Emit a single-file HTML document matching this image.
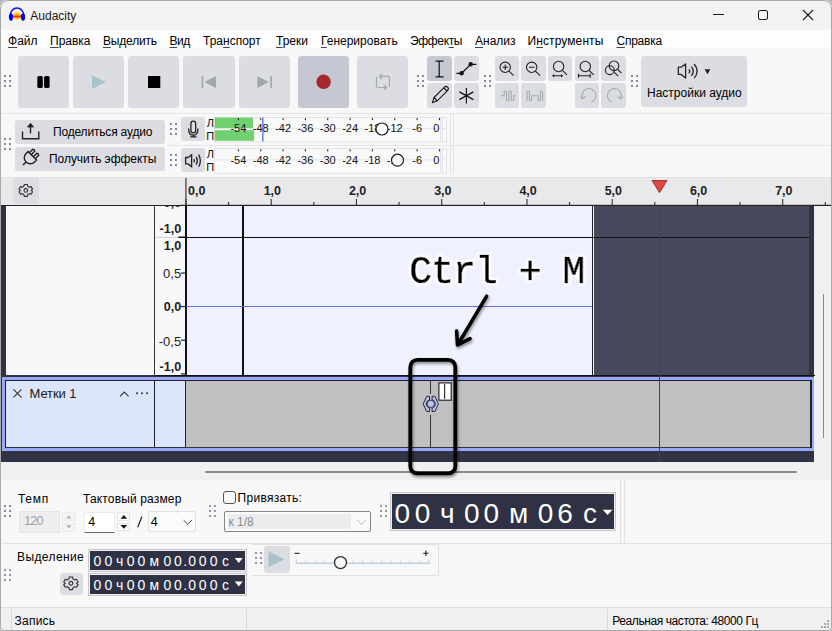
<!DOCTYPE html>
<html><head><meta charset="utf-8">
<style>
*{box-sizing:border-box;margin:0;padding:0}
html,body{width:832px;height:631px;overflow:hidden;background:#b4b8c0;font-family:"Liberation Sans",sans-serif;color:#000}
.a{position:absolute}
#win{position:absolute;left:0;top:0;width:832px;height:631px;background:#f8f8f8;border-radius:8px 8px 4px 4px;overflow:hidden}
#frame{position:absolute;left:0;top:0;width:832px;height:630.5px;border:1px solid #a9a9a9;border-radius:8px 8px 4px 4px}
.t{position:absolute;white-space:pre;font-size:12px;line-height:14px}
.menu span{position:absolute;top:0;white-space:pre;font-size:12px;line-height:14px}
.u{text-decoration:underline;text-decoration-color:#444;text-underline-offset:1.5px}
.btn{position:absolute;background:#dcdde2;border-radius:3px}
.grip{position:absolute;width:2px;height:2px;background:#868aa0;box-shadow:5px 0 #868aa0,0 5px #868aa0,5px 5px #868aa0,0 10px #868aa0,5px 10px #868aa0}
.g2{background:#9296aa;box-shadow:5px 0 #9296aa,0 5px #9296aa,5px 5px #9296aa,0 10px #9296aa,5px 10px #9296aa}
.hl{position:absolute;height:1px;background:#e3e3e3}
.vl{position:absolute;width:1px;background:#e3e3e3}
</style></head><body>
<div id="win">
  <!-- title bar -->
  <div class="a" style="left:0;top:0;width:832px;height:30px;background:#f3f3f3"></div>
  <svg class="a" style="left:0;top:0" width="32" height="28" viewBox="0 0 32 28">
    <defs><radialGradient id="ag" cx="50%" cy="50%" r="50%"><stop offset="0" stop-color="#ff8a00"/><stop offset="0.55" stop-color="#ffc020"/><stop offset="1" stop-color="#fff0a0"/></radialGradient></defs>
    <ellipse cx="17" cy="16" rx="4.6" ry="4.4" fill="url(#ag)"/>
    <rect x="12.8" y="15.6" width="8.4" height="1.8" fill="#ff2a00"/>
    <path d="M10.2 15.5 A6.8 7.4 0 0 1 23.8 15.5" fill="none" stroke="#1010ff" stroke-width="1.5"/>
    <ellipse cx="11" cy="17" rx="2.1" ry="3.7" fill="#0000f0"/>
    <ellipse cx="23" cy="17" rx="2.1" ry="3.7" fill="#0000f0"/>
  </svg>
  <div class="t" style="left:30.3px;top:9px;font-size:12px;color:#1a1a1a">Audacity</div>
  <!-- window controls -->
  <div class="a" style="left:713px;top:14px;width:11px;height:1px;background:#1a1a1a"></div>
  <div class="a" style="left:758px;top:10px;width:10px;height:10px;border:1px solid #1a1a1a;border-radius:2px"></div>
  <svg class="a" style="left:802px;top:9px" width="12" height="12" viewBox="0 0 12 12"><path d="M1 1L11 11M11 1L1 11" stroke="#1a1a1a" stroke-width="1.1"/></svg>

  <!-- menu bar -->
  <div class="a" style="left:0;top:30px;width:832px;height:18.4px;background:#fdfdfd"></div>
  <div class="menu a" style="left:0;top:33.7px">
    <span style="left:8px"><span class="u" style="position:static">Ф</span>айл</span>
    <span style="left:50px"><span class="u" style="position:static">П</span>равка</span>
    <span style="left:103px;letter-spacing:-0.18px"><span class="u" style="position:static">В</span>ыделить</span>
    <span style="left:169.5px;letter-spacing:-0.5px"><span class="u" style="position:static">В</span>ид</span>
    <span style="left:203px">Тра<span class="u" style="position:static">н</span>спорт</span>
    <span style="left:276px"><span class="u" style="position:static">Т</span>реки</span>
    <span style="left:321px"><span class="u" style="position:static">Г</span>енерировать</span>
    <span style="left:410px;letter-spacing:-0.35px">Эффек<span class="u" style="position:static">т</span>ы</span>
    <span style="left:475px"><span class="u" style="position:static">А</span>нализ</span>
    <span style="left:527.5px;letter-spacing:0.1px">И<span class="u" style="position:static">н</span>струменты</span>
    <span style="left:616.5px;letter-spacing:-0.25px"><span class="u" style="position:static">С</span>правка</span>
  </div>

  <!-- toolbar 1 -->
  <div class="hl" style="left:0;top:113px;width:832px;background:#e6e6e6"></div>
  <div class="grip" style="left:4px;top:75px"></div>
  <div class="btn" style="left:18px;top:56px;width:51px;height:52px"></div>
  <div class="btn" style="left:73px;top:56px;width:51px;height:52px"></div>
  <div class="btn" style="left:128px;top:56px;width:51px;height:52px"></div>
  <div class="btn" style="left:183px;top:56px;width:52px;height:52px"></div>
  <div class="btn" style="left:239px;top:56px;width:51px;height:52px"></div>
  <div class="btn" style="left:298px;top:56px;width:51px;height:52px;background:#c5c7d3"></div>
  <div class="btn" style="left:357px;top:56px;width:51px;height:52px"></div>
  <svg class="a" style="left:0;top:50px" width="420" height="64" viewBox="0 50 420 64">
    <rect x="37.3" y="76" width="5.5" height="12" rx="1.6" fill="#000"/>
    <rect x="44.1" y="76" width="5.5" height="12" rx="1.6" fill="#000"/>
    <path d="M92 75.2 L106 82 L92 89 Z" fill="#a9c3cb"/>
    <rect x="148" y="76" width="12.3" height="12" fill="#000"/>
    <rect x="201.6" y="76" width="1.6" height="12" fill="#a2a6ad"/>
    <path d="M216 76 L204.5 82 L216 88 Z" fill="#a2a6ad"/>
    <path d="M257.3 76 L268.8 82 L257.3 88 Z" fill="#a2a6ad"/>
    <rect x="270.3" y="76" width="1.6" height="12" fill="#a2a6ad"/>
    <circle cx="323.6" cy="81.8" r="7.2" fill="#a5282c"/>
    <g fill="none" stroke="#a4a8b0" stroke-width="1.2" stroke-linecap="round">
      <path d="M389.4 86.3 V77.6 Q389.4 76.4 388.2 76.4 H379.6 M381.9 74.1 L379.4 76.4 L381.9 78.7"/>
      <path d="M376.5 77.4 V86.3 Q376.5 87.5 377.7 87.5 H386.4 M384.1 85.2 L386.6 87.5 L384.1 89.8"/>
    </g>
  </svg>
  <div class="grip" style="left:417px;top:75px"></div>
  <!-- tools -->
  <div class="btn" style="left:427px;top:56px;width:25px;height:25px;background:#c5c7d3"></div>
  <div class="btn" style="left:454px;top:56px;width:25px;height:25px"></div>
  <div class="btn" style="left:427px;top:83px;width:25px;height:25px"></div>
  <div class="btn" style="left:454px;top:83px;width:25px;height:25px"></div>
  <div class="grip" style="left:484px;top:75px"></div>
  <div class="btn" style="left:495px;top:56px;width:24px;height:25px"></div>
  <div class="btn" style="left:521px;top:56px;width:25px;height:25px"></div>
  <div class="btn" style="left:548px;top:56px;width:24px;height:25px"></div>
  <div class="btn" style="left:575px;top:56px;width:24px;height:25px"></div>
  <div class="btn" style="left:601px;top:56px;width:25px;height:25px"></div>
  <div class="btn" style="left:495px;top:83px;width:24px;height:25px"></div>
  <div class="btn" style="left:521px;top:83px;width:25px;height:25px"></div>
  <div class="btn" style="left:575px;top:83px;width:24px;height:25px"></div>
  <div class="btn" style="left:601px;top:83px;width:25px;height:25px"></div>
  <svg class="a" style="left:420px;top:50px" width="212" height="64" viewBox="420 50 212 64">
    <g stroke="#111" stroke-width="1.2" fill="none">
      <path d="M439.2 61.2 V76.8 M435.6 61.2 H443.6 M435.6 76.8 H443.6"/>
      <path d="M456.5 73.3 H461.6 L470.7 64.3 H476.3"/>
      <path d="M466.4 88 V103.4 M459.4 99.6 L473.4 91.9 M459.4 91.9 L473.4 99.6"/>
      <path d="M432.5 102.7 L434 97.5 L444.2 87.3 Q446 85.6 447.6 87.2 Q449.2 88.9 447.5 90.6 L437.3 100.8 Z M434 97.5 L437.3 100.8 M443.8 87.8 L447 91" stroke-width="1.1"/>
    </g>
    <circle cx="461.6" cy="73.3" r="2.2" fill="#111"/>
    <circle cx="470.7" cy="64.3" r="2.2" fill="#111"/>
    <g stroke="#222" stroke-width="1.1" fill="none">
      <circle cx="505.2" cy="67.3" r="5.2"/><path d="M509 71.1 L513.6 75.7 M502.5 67.3 H508 M505.2 64.6 V70"/>
      <circle cx="531.7" cy="67.3" r="5.2"/><path d="M535.5 71.1 L540.1 75.7 M529 67.3 H534.5"/>
      <circle cx="558.6" cy="66.5" r="5.2"/><path d="M562.4 70.3 L567 74.9 M552.5 75.8 H562.7"/>
      <circle cx="585.3" cy="66.5" r="5.2"/><path d="M589.1 70.3 L593.7 74.9 M578.5 75.8 H590.2 M578.5 73.8 V77.8 M590.2 73.8 V77.8"/>
      <circle cx="609.8" cy="70.2" r="4.4"/><circle cx="614" cy="65.8" r="4.8"/><path d="M617.4 69.2 L621.4 73.2 M614.4 72.4 L618.2 76.2"/>
    </g>
    <path d="M552.2 75.8 L554.2 74 V77.6 Z M563 75.8 L561 74 V77.6 Z" fill="#222"/>
    <g stroke="#a6aab2" stroke-width="1.1" fill="none">
      <path d="M500.5 95.8 H504.1 V92.2 Q504.1 91 505.3 91 Q506.5 91 506.5 92.2 V99.6 Q506.5 100.8 507.7 100.8 Q508.9 100.8 508.9 99.6 V92.2 Q508.9 91 510.1 91 Q511.3 91 511.3 92.2 V99.6 Q511.3 100.8 512.5 100.8 Q513.7 100.8 513.7 99.6 V95.8 H515.8"/>
      <path d="M527.1 100.8 V92.2 Q527.1 91 528.25 91 Q529.4 91 529.4 92.2 V99.6 Q529.4 100.8 530.55 100.8 Q531.7 100.8 531.7 99.6 V95.8 H538.2 V99.6 Q538.2 100.8 539.3 100.8 Q540.4 100.8 540.4 99.6 V92.2 Q540.4 91 541.5 91 Q542.6 91 542.6 92.2 V100.8"/>
      <path d="M591.5 102 A6.9 6.9 0 1 0 582.6 98"/><path d="M580.3 96.6 L582.7 98.8 L585.3 96.5"/>
      <path d="M611.9 102 A6.9 6.9 0 1 1 620.8 98"/><path d="M623.1 96.6 L620.7 98.8 L618.1 96.5"/>
    </g>
  </svg>
  <div class="grip" style="left:631px;top:75px"></div>
  <div class="btn" style="left:641px;top:56px;width:106px;height:51px"></div>
  <svg class="a" style="left:670px;top:58px" width="50" height="26" viewBox="670 58 50 26">
    <g stroke="#222" stroke-width="1.2" fill="none">
      <path d="M678.3 67.2 H681.2 L685.6 63.9 V78 L681.2 74.4 H678.3 Z" stroke-linejoin="round" stroke-width="1.3"/>
      <path d="M688.9 69.4 Q690.6 71.3 688.9 73.3" stroke-width="1.3"/><path d="M691.3 66.6 Q695.3 71.2 691.3 75.9" stroke-width="1.3"/><path d="M694.1 64 Q700.2 71.1 694.1 78.2" stroke-width="1.3"/>
    </g>
    <path d="M704.6 69.3 H710.4 L707.5 74.3 Z" fill="#222"/>
  </svg>
  <div class="t" style="left:647px;top:86px;font-size:12px;letter-spacing:0px">Настройки аудио</div>

  <!-- toolbar rows 2-3 -->
  <div class="hl" style="left:167px;top:145px;width:665px;background:#e6e6e6"></div>
  
  <div class="grip" style="left:4px;top:138px"></div>
  <div class="btn" style="left:15px;top:120px;width:150px;height:24px"></div>
  <div class="btn" style="left:15px;top:147px;width:150px;height:24px"></div>
  <svg class="a" style="left:15px;top:118px" width="30" height="56" viewBox="15 118 30 56">
    <g stroke="#222" stroke-width="1.2" fill="none">
      <path d="M22.5 131.5 V138.8 H38.8 V131.5" stroke-width="1.4"/><path d="M30.5 133.5 V124" stroke-width="1.4"/><path d="M27.5 127 L30.5 123.2 L33.5 127 Z" fill="#222" stroke-width="0.8"/>
      <g transform="translate(31.5 156.5) rotate(45) scale(1.1)"><path d="M-5.5 -1 H5.5 V1.5 A5.5 5.5 0 0 1 -5.5 1.5 Z M-3.8 -1 V-5.5 Q-2.6 -6.6 -1.4 -5.5 V-1 M1.4 -1 V-5.5 Q2.6 -6.6 3.8 -5.5 V-1 M0 7 V11" stroke-width="1.3"/></g>
    </g>
  </svg>
  <div class="t" style="left:53px;top:125px;font-size:12px;letter-spacing:-0.18px">Поделиться аудио</div>
  <div class="t" style="left:49px;top:152px;font-size:12px;letter-spacing:-0.05px">Получить эффекты</div>
  <div class="grip" style="left:170px;top:122.5px"></div>
  <div class="grip" style="left:170px;top:154px"></div>
  <div class="btn" style="left:181px;top:117px;width:24px;height:24px"></div>
  <div class="btn" style="left:181px;top:148px;width:24px;height:24px"></div>
  <svg class="a" style="left:181px;top:117px" width="24" height="56" viewBox="181 117 24 56">
    <g stroke="#222" stroke-width="1.2" fill="none">
      <rect x="190.9" y="121.2" width="4.8" height="11.6" rx="2.4" stroke-width="1.3"/>
      <path d="M188.6 128.5 Q188.6 135.2 193.3 135.2 Q198 135.2 198 128.5" stroke-width="1.3"/><path d="M193.3 135.2 V136.6 M190.2 136.8 H196.5" stroke-width="1.3"/>
      <path d="M185.6 157.5 H188 L191.6 154.8 V166.6 L188 163.9 H185.6 Z" stroke-width="1.3"/>
      <path d="M194 159 Q194.8 160.7 194 162.4" stroke-width="1.3"/><path d="M196.3 156.8 Q198.2 160.7 196.3 164.6" stroke-width="1.3"/><path d="M198.8 154.6 Q201.8 160.7 198.8 166.8" stroke-width="1.3"/>
    </g>
  </svg>
  <svg class="a" style="left:200px;top:114px" width="260" height="62" viewBox="200 114 260 62">
    <rect x="214.5" y="117.5" width="226" height="24.5" fill="#fafafa" stroke="#e2e2e2"/>
    <line x1="215" y1="128.7" x2="440" y2="128.7" stroke="#e2e2e2"/>
    <rect x="442.5" y="117.5" width="4" height="24.5" fill="#fafafa" stroke="#e2e2e2"/>
    <line x1="442.5" y1="128.7" x2="446.5" y2="128.7" stroke="#e2e2e2"/>
    <rect x="214.8" y="117.6" width="38.2" height="10.5" fill="#6fd16f"/>
    <rect x="214.8" y="130.2" width="39.3" height="10.6" fill="#6fd16f"/>
    <line x1="238.4" y1="118" x2="238.4" y2="120.2" stroke="#222" stroke-width="1"/>
    <text x="238.4" y="132.3" text-anchor="middle" font-size="11" font-family="Liberation Sans" fill="#111">-54</text>
    <line x1="260.74" y1="118" x2="260.74" y2="120.2" stroke="#222" stroke-width="1"/>
    <text x="260.74" y="132.3" text-anchor="middle" font-size="11" font-family="Liberation Sans" fill="#111">-48</text>
    <line x1="283.08" y1="118" x2="283.08" y2="120.2" stroke="#222" stroke-width="1"/>
    <text x="283.08" y="132.3" text-anchor="middle" font-size="11" font-family="Liberation Sans" fill="#111">-42</text>
    <line x1="305.42" y1="118" x2="305.42" y2="120.2" stroke="#222" stroke-width="1"/>
    <text x="305.42" y="132.3" text-anchor="middle" font-size="11" font-family="Liberation Sans" fill="#111">-36</text>
    <line x1="327.76" y1="118" x2="327.76" y2="120.2" stroke="#222" stroke-width="1"/>
    <text x="327.76" y="132.3" text-anchor="middle" font-size="11" font-family="Liberation Sans" fill="#111">-30</text>
    <line x1="350.1" y1="118" x2="350.1" y2="120.2" stroke="#222" stroke-width="1"/>
    <text x="350.1" y="132.3" text-anchor="middle" font-size="11" font-family="Liberation Sans" fill="#111">-24</text>
    <line x1="372.44" y1="118" x2="372.44" y2="120.2" stroke="#222" stroke-width="1"/>
    <text x="372.44" y="132.3" text-anchor="middle" font-size="11" font-family="Liberation Sans" fill="#111">-18</text>
    <line x1="394.78" y1="118" x2="394.78" y2="120.2" stroke="#222" stroke-width="1"/>
    <text x="394.78" y="132.3" text-anchor="middle" font-size="11" font-family="Liberation Sans" fill="#111">-12</text>
    <line x1="417.12" y1="118" x2="417.12" y2="120.2" stroke="#222" stroke-width="1"/>
    <text x="417.12" y="132.3" text-anchor="middle" font-size="11" font-family="Liberation Sans" fill="#111">-6</text>
    <line x1="439.46000000000004" y1="118" x2="439.46000000000004" y2="120.2" stroke="#222" stroke-width="1"/>
    <text x="436.2" y="132.3" text-anchor="middle" font-size="11" font-family="Liberation Sans" fill="#111">0</text>
    <rect x="262.2" y="117.5" width="1.3" height="24" fill="#4d6ee6"/>
    <circle cx="382" cy="129" r="6" fill="#fafafa" stroke="#222" stroke-width="1.2"/>
    <text x="210.3" y="126.5" text-anchor="middle" font-size="11" font-family="Liberation Sans" fill="#111">Л</text>
    <text x="210.3" y="139.8" text-anchor="middle" font-size="11" font-family="Liberation Sans" fill="#111">П</text>
    <rect x="214.5" y="148.7" width="226" height="24.5" fill="#fafafa" stroke="#e2e2e2"/>
    <line x1="215" y1="159.89999999999998" x2="440" y2="159.89999999999998" stroke="#e2e2e2"/>
    <rect x="442.5" y="148.7" width="4" height="24.5" fill="#fafafa" stroke="#e2e2e2"/>
    <line x1="442.5" y1="159.89999999999998" x2="446.5" y2="159.89999999999998" stroke="#e2e2e2"/>
    <line x1="238.4" y1="149.2" x2="238.4" y2="151.39999999999998" stroke="#222" stroke-width="1"/>
    <text x="238.4" y="163.5" text-anchor="middle" font-size="11" font-family="Liberation Sans" fill="#111">-54</text>
    <line x1="260.74" y1="149.2" x2="260.74" y2="151.39999999999998" stroke="#222" stroke-width="1"/>
    <text x="260.74" y="163.5" text-anchor="middle" font-size="11" font-family="Liberation Sans" fill="#111">-48</text>
    <line x1="283.08" y1="149.2" x2="283.08" y2="151.39999999999998" stroke="#222" stroke-width="1"/>
    <text x="283.08" y="163.5" text-anchor="middle" font-size="11" font-family="Liberation Sans" fill="#111">-42</text>
    <line x1="305.42" y1="149.2" x2="305.42" y2="151.39999999999998" stroke="#222" stroke-width="1"/>
    <text x="305.42" y="163.5" text-anchor="middle" font-size="11" font-family="Liberation Sans" fill="#111">-36</text>
    <line x1="327.76" y1="149.2" x2="327.76" y2="151.39999999999998" stroke="#222" stroke-width="1"/>
    <text x="327.76" y="163.5" text-anchor="middle" font-size="11" font-family="Liberation Sans" fill="#111">-30</text>
    <line x1="350.1" y1="149.2" x2="350.1" y2="151.39999999999998" stroke="#222" stroke-width="1"/>
    <text x="350.1" y="163.5" text-anchor="middle" font-size="11" font-family="Liberation Sans" fill="#111">-24</text>
    <line x1="372.44" y1="149.2" x2="372.44" y2="151.39999999999998" stroke="#222" stroke-width="1"/>
    <text x="372.44" y="163.5" text-anchor="middle" font-size="11" font-family="Liberation Sans" fill="#111">-18</text>
    <line x1="394.78" y1="149.2" x2="394.78" y2="151.39999999999998" stroke="#222" stroke-width="1"/>
    <text x="394.78" y="163.5" text-anchor="middle" font-size="11" font-family="Liberation Sans" fill="#111">-12</text>
    <line x1="417.12" y1="149.2" x2="417.12" y2="151.39999999999998" stroke="#222" stroke-width="1"/>
    <text x="417.12" y="163.5" text-anchor="middle" font-size="11" font-family="Liberation Sans" fill="#111">-6</text>
    <line x1="439.46000000000004" y1="149.2" x2="439.46000000000004" y2="151.39999999999998" stroke="#222" stroke-width="1"/>
    <text x="436.2" y="163.5" text-anchor="middle" font-size="11" font-family="Liberation Sans" fill="#111">0</text>
    <circle cx="397.5" cy="160.2" r="6" fill="#fafafa" stroke="#222" stroke-width="1.2"/>
    <text x="210.3" y="157.7" text-anchor="middle" font-size="11" font-family="Liberation Sans" fill="#111">Л</text>
    <text x="210.3" y="171.0" text-anchor="middle" font-size="11" font-family="Liberation Sans" fill="#111">П</text>
    <line x1="450.5" y1="114" x2="450.5" y2="175" stroke="#e2e2e2"/><line x1="453.5" y1="114" x2="453.5" y2="175" stroke="#e2e2e2"/>
  </svg>

  <!-- ruler -->
  <div class="a" style="left:0;top:177px;width:832px;height:28px;background:#e9e9eb;border-top:1px solid #e1e1e3"></div>
  <div class="a" style="left:0;top:204.8px;width:832px;height:1.2px;background:#222"></div>
  <div class="btn" style="left:13px;top:178px;width:26px;height:26px"></div>
  <svg class="a" style="left:13px;top:178px" width="26" height="26" viewBox="13 178 26 26">
    <g transform="translate(25.8 190.4) scale(0.9)" fill="none" stroke="#333" stroke-width="1.25">
      <path d="M-1.6 -6.6 L1.6 -6.6 L2.2 -4.6 L3.9 -3.6 L5.9 -4.2 L7.5 -1.4 L6 0 L7.5 1.4 L5.9 4.2 L3.9 3.6 L2.2 4.6 L1.6 6.6 L-1.6 6.6 L-2.2 4.6 L-3.9 3.6 L-5.9 4.2 L-7.5 1.4 L-6 0 L-7.5 -1.4 L-5.9 -4.2 L-3.9 -3.6 L-2.2 -4.6 Z" stroke-linejoin="round"/>
      <circle r="2"/>
    </g>
  </svg>
  <svg class="a" style="left:180px;top:176px" width="652" height="30" viewBox="180 176 652 30">
    <rect x="185.2" y="178" width="1.4" height="28" fill="#555"/>
    <rect x="185.40" y="199" width="1.1" height="6" fill="#333"/>
    <text x="188.00" y="195.2" font-size="12.5" font-weight="700" font-family="Liberation Sans" fill="#222">0,0</text>
    <rect x="228.00" y="202" width="1.1" height="3" fill="#333"/>
    <rect x="270.65" y="199" width="1.1" height="6" fill="#333"/>
    <text x="263.65" y="195.2" font-size="12.5" font-weight="700" font-family="Liberation Sans" fill="#222">1,0</text>
    <rect x="313.25" y="202" width="1.1" height="3" fill="#333"/>
    <rect x="355.90" y="199" width="1.1" height="6" fill="#333"/>
    <text x="348.90" y="195.2" font-size="12.5" font-weight="700" font-family="Liberation Sans" fill="#222">2,0</text>
    <rect x="398.50" y="202" width="1.1" height="3" fill="#333"/>
    <rect x="441.15" y="199" width="1.1" height="6" fill="#333"/>
    <text x="434.15" y="195.2" font-size="12.5" font-weight="700" font-family="Liberation Sans" fill="#222">3,0</text>
    <rect x="483.75" y="202" width="1.1" height="3" fill="#333"/>
    <rect x="526.40" y="199" width="1.1" height="6" fill="#333"/>
    <text x="519.40" y="195.2" font-size="12.5" font-weight="700" font-family="Liberation Sans" fill="#222">4,0</text>
    <rect x="569.00" y="202" width="1.1" height="3" fill="#333"/>
    <rect x="611.65" y="199" width="1.1" height="6" fill="#333"/>
    <text x="604.65" y="195.2" font-size="12.5" font-weight="700" font-family="Liberation Sans" fill="#222">5,0</text>
    <rect x="654.25" y="202" width="1.1" height="3" fill="#333"/>
    <rect x="696.90" y="199" width="1.1" height="6" fill="#333"/>
    <text x="689.90" y="195.2" font-size="12.5" font-weight="700" font-family="Liberation Sans" fill="#222">6,0</text>
    <rect x="739.50" y="202" width="1.1" height="3" fill="#333"/>
    <rect x="782.15" y="199" width="1.1" height="6" fill="#333"/>
    <text x="775.15" y="195.2" font-size="12.5" font-weight="700" font-family="Liberation Sans" fill="#222">7,0</text>
    <rect x="824.75" y="202" width="1.1" height="3" fill="#333"/>
    <rect x="180" y="204.8" width="652" height="1.2" fill="#222"/>
    <path d="M652 180.5 H667 L659.5 192.7 Z" fill="#e04848" stroke="#8a2020" stroke-width="0.8"/>
  </svg>

  <!-- tracks -->
  <div class="a" style="left:0;top:206px;width:814px;height:256px;background:#2f3345"></div>
  <div class="a" style="left:814px;top:206px;width:18px;height:274px;background:#f0f0f0"></div>
  <div class="a" style="left:822.5px;top:294px;width:1.2px;height:144px;background:#8a8a8a"></div>
  <!-- audio track panel -->
  <div class="a" style="left:5.8px;top:206px;width:148.2px;height:168.6px;background:#f8f8f8"></div>
  <div class="a" style="left:154px;top:206px;width:1px;height:169px;background:#333"></div>
  <div class="a" style="left:155px;top:206px;width:30.5px;height:169px;background:#f8f8f8"></div>
  <div class="a" style="left:185.5px;top:206px;width:408px;height:169px;background:#eff1fe"></div>
  <div class="a" style="left:593.5px;top:206px;width:215px;height:169px;background:#464a5c"></div>
  <div class="a" style="left:808.8px;top:206px;width:5.5px;height:169px;background:#2f3345"></div>
  <div class="a" style="left:591.8px;top:206px;width:1.6px;height:169px;background:#222"></div>
  <div class="a" style="left:184.6px;top:206px;width:2px;height:169px;background:#111"></div>
  <div class="a" style="left:241.7px;top:206px;width:2px;height:169px;background:#111"></div>
  <div class="a" style="left:178px;top:236.5px;width:630.8px;height:1.5px;background:#111"></div>
  <div class="a" style="left:186px;top:306px;width:406px;height:1px;background:#6470e0"></div>
  <div class="a" style="left:155.5px;top:374.6px;width:659px;height:1.5px;background:#111"></div>
  <svg class="a" style="left:150px;top:205px" width="40" height="172" viewBox="150 205 40 172">
    <g font-family="Liberation Sans" fill="#222" text-anchor="end">
      <text x="181.2" y="207.2" font-size="12.6" font-weight="700">0,0</text>
      <text x="181.2" y="233.2" font-size="12.6" font-weight="700">-1,0</text>
      <text x="181.2" y="250.1" font-size="12.6" font-weight="700">1,0</text>
      <text x="181.2" y="277.7" font-size="13" fill="#1e1e1e">0,5</text>
      <text x="181.2" y="311" font-size="12.6" font-weight="700">0,0</text>
      <text x="181.2" y="345.6" font-size="13" fill="#1e1e1e">-0,5</text>
      <text x="181.2" y="371" font-size="12.6" font-weight="700">-1,0</text>
    </g>
    <g fill="#333">
      <rect x="181" y="272.4" width="4" height="1.3"/>
      <rect x="181" y="305.9" width="4" height="1.3"/>
      <rect x="181" y="339.6" width="4" height="1.3"/>
      <rect x="181" y="373.2" width="4" height="1.3"/>
      <rect x="178" y="236.5" width="7" height="1.5" fill="#111"/>
    </g>
    <rect x="155.5" y="236.8" width="23" height="1" fill="#d4d4d4"/>
  </svg>
  <!-- label track -->
  <div class="a" style="left:2px;top:376.5px;width:812px;height:74px;background:#98a7f7"></div>
  <div class="a" style="left:5px;top:380px;width:807px;height:67.8px;background:#1e2030"></div>
  <div class="a" style="left:5.9px;top:381px;width:147.9px;height:65.7px;background:#dbe5fb"></div>
  <div class="a" style="left:154.8px;top:381px;width:30px;height:65.7px;background:#dbe5fb"></div>
  <div class="a" style="left:186.2px;top:381px;width:623.5px;height:65.7px;background:#c0c0c0"></div>
  <div class="a" style="left:6px;top:446.7px;width:804px;height:1px;background:#333"></div>
  <div class="t" style="left:29.5px;top:386px;font-size:13px;line-height:15px;color:#1a1a1a;letter-spacing:-0.1px">Метки 1</div>
  <svg class="a" style="left:8px;top:383px" width="148" height="20" viewBox="8 383 148 20">
    <path d="M13.5 389.3 L21.5 397.3 M21.5 389.3 L13.5 397.3" stroke="#333" stroke-width="1.1"/>
    <path d="M120 396.3 L124.3 392 L128.6 396.3" stroke="#333" stroke-width="1.1" fill="none"/>
    <circle cx="137" cy="393.2" r="1" fill="#333"/><circle cx="142" cy="393.2" r="1" fill="#333"/><circle cx="147" cy="393.2" r="1" fill="#333"/>
  </svg>
  <div class="a" style="left:430.1px;top:381px;width:1.1px;height:12.5px;background:#333"></div>
  <div class="a" style="left:430.1px;top:415px;width:1.1px;height:32px;background:#333"></div>
  <svg class="a" style="left:418px;top:380px" width="40" height="36" viewBox="418 380 40 36">
    <path d="M429.5 396.3 H426.7 L423.2 403.9 L426.7 411.5 H429.5 V407.9 A4.1 4.1 0 0 1 429.5 399.9 Z" fill="#b6bef4" stroke="#1a1a1a" stroke-width="0.9"/>
    <path d="M432.1 396.3 H434.9 L438.4 403.9 L434.9 411.5 H432.1 V407.9 A4.1 4.1 0 0 0 432.1 399.9 Z" fill="#b6bef4" stroke="#1a1a1a" stroke-width="0.9"/>
    <circle cx="430.8" cy="403.9" r="3.7" fill="#bcc3f4" stroke="#1a1a1a" stroke-width="0.8"/>
    <rect x="438.9" y="382.9" width="12.3" height="17.3" fill="#fff" stroke="#2a2a2a" stroke-width="1.2"/>
    <rect x="444.1" y="384.1" width="1.1" height="14.8" fill="#222"/>
  </svg>
  <div class="a" style="left:5px;top:450.5px;width:809px;height:11.5px;background:#2f3345"></div>
  <div class="a" style="left:0;top:462px;width:814px;height:18px;background:#f0f0f0"></div>
  <div class="a" style="left:205.4px;top:471px;width:591.2px;height:1.6px;background:#8a8a8a;border-radius:1px"></div>
  <div class="a" style="left:659px;top:206px;width:1.2px;height:256px;background:#b01030"></div>

  <!-- bottom toolbars -->
  <div class="a" style="left:0;top:480px;width:832px;height:127px;background:#f8f8f8"></div>
  <div class="hl" style="left:2px;top:543px;width:830px;background:#e2e2e2"></div>
  <div class="a" style="left:620px;top:480px;width:1px;height:63px;background:#e2e2e2"></div>
  <div class="a" style="left:623.5px;top:480px;width:1px;height:63px;background:#e2e2e2"></div>
  <div class="grip" style="left:4px;top:505px"></div>
  <div class="t" style="left:18px;top:492px;letter-spacing:0.7px">Темп</div>
  <div class="t" style="left:83px;top:491.5px;letter-spacing:0.15px">Тактовый размер</div>
  <div class="a" style="left:18.5px;top:511px;width:41px;height:21.5px;border:1px solid #e6e6e6;background:#eeeeee"></div>
  <div class="t" style="left:24px;top:514px;font-size:12.8px;color:#a0a0a0;letter-spacing:-0.9px">120</div>
  <div class="a" style="left:61.7px;top:511.5px;width:14px;height:9.5px;border:1px solid #ececec;background:#f4f4f4"></div>
  <div class="a" style="left:61.7px;top:522.5px;width:14px;height:9.5px;border:1px solid #ececec;background:#f4f4f4"></div>
  <div class="a" style="left:83.6px;top:511.5px;width:31px;height:21px;background:#fff;border:1px solid #ebebeb;border-bottom:1.5px solid #6a6a6a;border-radius:2px 2px 0 0"></div>
  <div class="t" style="left:88.3px;top:514.5px;font-size:12.5px">4</div>
  <div class="a" style="left:117.2px;top:512.3px;width:13.3px;height:8.5px;border:1px solid #e6e6e6;background:#fbfbfb"></div>
  <div class="a" style="left:117.2px;top:522.6px;width:13.3px;height:8.5px;border:1px solid #e6e6e6;background:#fbfbfb"></div>
  
  <div class="a" style="left:147.5px;top:510.8px;width:48px;height:21.7px;background:#fbfbfb;border:1px solid #e0e0e0;border-radius:2px"></div>
  <div class="t" style="left:150.7px;top:514.5px;font-size:12.5px">4</div>
  <div class="grip g2" style="left:209px;top:505px"></div>
  <div class="a" style="left:223.1px;top:491.3px;width:12.7px;height:12.4px;border:1px solid #555;border-radius:3px;background:#fafafa"></div>
  <div class="t" style="left:237.5px;top:490.5px;letter-spacing:0.3px">Привязать:</div>
  <div class="a" style="left:223.7px;top:510.6px;width:147px;height:21.5px;border:1px solid #858585;border-radius:2px;background:#fafafa"></div>
  <div class="a" style="left:228px;top:514.2px;width:123.2px;height:14.6px;background:#ececec"></div>
  <div class="t" style="left:228.5px;top:514.5px;color:#8c8c8c">к 1/8</div>
  <div class="grip g2" style="left:380px;top:505px"></div>
  <div class="a" style="left:390.2px;top:492.2px;width:226px;height:39px;border:1px solid #c8c8c8;background:#f0f0f0"></div>
  <div class="a" style="left:392.2px;top:494.1px;width:221.7px;height:35.2px;background:#2e3244"></div>
  <div class="a" style="left:88.4px;top:549.4px;width:158.3px;height:22.4px;border:1px solid #c8c8c8;background:#f0f0f0"></div>
  <div class="a" style="left:90px;top:551px;width:155.3px;height:19.2px;background:#2e3244"></div>
  <div class="a" style="left:88.4px;top:573.2px;width:158.3px;height:22.4px;border:1px solid #c8c8c8;background:#f0f0f0"></div>
  <div class="a" style="left:90px;top:574.8px;width:155.3px;height:18.8px;background:#2e3244"></div>
  <div class="grip g2" style="left:4px;top:569px"></div>
  <div class="t" style="left:17px;top:549.5px;letter-spacing:0.4px">Выделение</div>
  <div class="btn" style="left:60px;top:572.7px;width:23px;height:22.6px"></div>
  <!-- play at speed -->
  <div class="a" style="left:252px;top:543.5px;width:186px;height:1px;background:#e2e2e2"></div>
  <div class="a" style="left:252px;top:575px;width:186px;height:1px;background:#e2e2e2"></div>
  <div class="a" style="left:438px;top:543.5px;width:1px;height:32px;background:#e2e2e2"></div>
  <div class="grip g2" style="left:255px;top:552px"></div>
  <div class="btn" style="left:263.5px;top:546px;width:26.5px;height:26.5px"></div>
  <!-- status bar -->
  <div class="a" style="left:0;top:606.8px;width:832px;height:25px;background:#f0f0f0;border-top:1.5px solid #dcdcdc"></div>
  <div class="a" style="left:10.5px;top:609px;width:1px;height:21px;background:#d8d8d8"></div>
  <div class="a" style="left:245.5px;top:609px;width:1px;height:21px;background:#d8d8d8"></div>
  <div class="a" style="left:607px;top:609px;width:1px;height:21px;background:#d8d8d8"></div>
  <div class="t" style="left:14.5px;top:613.5px;letter-spacing:0.25px">Запись</div>
  <div class="t" style="left:612.3px;top:613.5px;letter-spacing:-0.42px">Реальная частота: 48000 Гц</div>
  <svg class="a" style="left:0;top:480px" width="832" height="151" viewBox="0 480 832 151">
    <path d="M66 518.5 L68.8 515.2 L71.6 518.5 Z M66 525.2 L68.8 528.5 L71.6 525.2 Z" fill="#b4b4b4"/>
    <path d="M120.5 518.8 L123.8 515 L127.1 518.8 Z M120.5 525 L123.8 528.8 L127.1 525 Z" fill="#111"/>
    <path d="M183.6 520.2 L187.7 524.2 L191.8 520.2" fill="none" stroke="#444" stroke-width="1"/>
    <path d="M137.7 527.3 L141.9 516.5" stroke="#1a1a1a" stroke-width="1.15"/>
    <path d="M357.3 520 L361.6 524.4 L366 520" fill="none" stroke="#b8b8b8" stroke-width="1"/>
    <text x="402.4" y="522.9" text-anchor="middle" font-size="28" font-family="Liberation Sans" fill="#fff">0</text>
    <text x="422.6" y="522.9" text-anchor="middle" font-size="28" font-family="Liberation Sans" fill="#fff">0</text>
    <text x="447.3" y="522.9" text-anchor="middle" font-size="28" font-family="Liberation Sans" fill="#fff">ч</text>
    <text x="471.7" y="522.9" text-anchor="middle" font-size="28" font-family="Liberation Sans" fill="#fff">0</text>
    <text x="491.2" y="522.9" text-anchor="middle" font-size="28" font-family="Liberation Sans" fill="#fff">0</text>
    <text x="518.6" y="522.9" text-anchor="middle" font-size="28" font-family="Liberation Sans" fill="#fff">м</text>
    <text x="545.5" y="522.9" text-anchor="middle" font-size="28" font-family="Liberation Sans" fill="#fff">0</text>
    <text x="565" y="522.9" text-anchor="middle" font-size="28" font-family="Liberation Sans" fill="#fff">6</text>
    <text x="589.9" y="522.9" text-anchor="middle" font-size="28" font-family="Liberation Sans" fill="#fff">с</text>
    <path d="M602.7 509.8 H612.5 L607.6 515 Z" fill="#fff"/>
    <text x="97.4" y="565.9" text-anchor="middle" font-size="14" font-family="Liberation Sans" fill="#fff">0</text>
    <text x="108.3" y="565.9" text-anchor="middle" font-size="14" font-family="Liberation Sans" fill="#fff">0</text>
    <text x="119.7" y="565.9" text-anchor="middle" font-size="14" font-family="Liberation Sans" fill="#fff">ч</text>
    <text x="130.6" y="565.9" text-anchor="middle" font-size="14" font-family="Liberation Sans" fill="#fff">0</text>
    <text x="141.5" y="565.9" text-anchor="middle" font-size="14" font-family="Liberation Sans" fill="#fff">0</text>
    <text x="154.4" y="565.9" text-anchor="middle" font-size="14" font-family="Liberation Sans" fill="#fff">м</text>
    <text x="167.3" y="565.9" text-anchor="middle" font-size="14" font-family="Liberation Sans" fill="#fff">0</text>
    <text x="177.9" y="565.9" text-anchor="middle" font-size="14" font-family="Liberation Sans" fill="#fff">0</text>
    <text x="185.2" y="565.9" text-anchor="middle" font-size="14" font-family="Liberation Sans" fill="#fff">.</text>
    <text x="192.1" y="565.9" text-anchor="middle" font-size="14" font-family="Liberation Sans" fill="#fff">0</text>
    <text x="202.7" y="565.9" text-anchor="middle" font-size="14" font-family="Liberation Sans" fill="#fff">0</text>
    <text x="213.6" y="565.9" text-anchor="middle" font-size="14" font-family="Liberation Sans" fill="#fff">0</text>
    <text x="225.5" y="565.9" text-anchor="middle" font-size="14" font-family="Liberation Sans" fill="#fff">с</text>
    <text x="97.4" y="589.5" text-anchor="middle" font-size="14" font-family="Liberation Sans" fill="#fff">0</text>
    <text x="108.3" y="589.5" text-anchor="middle" font-size="14" font-family="Liberation Sans" fill="#fff">0</text>
    <text x="119.7" y="589.5" text-anchor="middle" font-size="14" font-family="Liberation Sans" fill="#fff">ч</text>
    <text x="130.6" y="589.5" text-anchor="middle" font-size="14" font-family="Liberation Sans" fill="#fff">0</text>
    <text x="141.5" y="589.5" text-anchor="middle" font-size="14" font-family="Liberation Sans" fill="#fff">0</text>
    <text x="154.4" y="589.5" text-anchor="middle" font-size="14" font-family="Liberation Sans" fill="#fff">м</text>
    <text x="167.3" y="589.5" text-anchor="middle" font-size="14" font-family="Liberation Sans" fill="#fff">0</text>
    <text x="177.9" y="589.5" text-anchor="middle" font-size="14" font-family="Liberation Sans" fill="#fff">0</text>
    <text x="185.2" y="589.5" text-anchor="middle" font-size="14" font-family="Liberation Sans" fill="#fff">.</text>
    <text x="192.1" y="589.5" text-anchor="middle" font-size="14" font-family="Liberation Sans" fill="#fff">0</text>
    <text x="202.7" y="589.5" text-anchor="middle" font-size="14" font-family="Liberation Sans" fill="#fff">0</text>
    <text x="213.6" y="589.5" text-anchor="middle" font-size="14" font-family="Liberation Sans" fill="#fff">0</text>
    <text x="225.5" y="589.5" text-anchor="middle" font-size="14" font-family="Liberation Sans" fill="#fff">с</text>
    <path d="M234.8 557.9 H242.7 L238.75 562.9 Z" fill="#fff"/>
    <path d="M234.8 581.5 H242.7 L238.75 586.5 Z" fill="#fff"/>
    <g transform="translate(70.9 583.3) scale(0.95)" fill="none" stroke="#333" stroke-width="1.2" stroke-linejoin="round">
      <path d="M-1.6 -6.6 L1.6 -6.6 L2.2 -4.6 L3.9 -3.6 L5.9 -4.2 L7.5 -1.4 L6 0 L7.5 1.4 L5.9 4.2 L3.9 3.6 L2.2 4.6 L1.6 6.6 L-1.6 6.6 L-2.2 4.6 L-3.9 3.6 L-5.9 4.2 L-7.5 1.4 L-6 0 L-7.5 -1.4 L-5.9 -4.2 L-3.9 -3.6 L-2.2 -4.6 Z"/>
      <circle r="2"/></g>
    <path d="M268.5 551.5 L284.5 559.3 L268.5 567.1 Z" fill="#a9c3cb"/>
    <rect x="295.3" y="562.5" width="135" height="1.6" fill="#c4d2e0"/>
    <rect x="295.80" y="559.5" width="1.1" height="3.5" fill="#c2cfdc"/>
    <rect x="305.26" y="561" width="1.1" height="2" fill="#c2cfdc"/>
    <rect x="314.73" y="561" width="1.1" height="2" fill="#c2cfdc"/>
    <rect x="324.19" y="561" width="1.1" height="2" fill="#c2cfdc"/>
    <rect x="333.66" y="561" width="1.1" height="2" fill="#c2cfdc"/>
    <rect x="343.12" y="561" width="1.1" height="2" fill="#c2cfdc"/>
    <rect x="352.59" y="561" width="1.1" height="2" fill="#c2cfdc"/>
    <rect x="362.05" y="561" width="1.1" height="2" fill="#c2cfdc"/>
    <rect x="371.51" y="561" width="1.1" height="2" fill="#c2cfdc"/>
    <rect x="380.98" y="561" width="1.1" height="2" fill="#c2cfdc"/>
    <rect x="390.44" y="561" width="1.1" height="2" fill="#c2cfdc"/>
    <rect x="399.91" y="561" width="1.1" height="2" fill="#c2cfdc"/>
    <rect x="409.37" y="561" width="1.1" height="2" fill="#c2cfdc"/>
    <rect x="418.84" y="561" width="1.1" height="2" fill="#c2cfdc"/>
    <rect x="428.30" y="559.5" width="1.1" height="3.5" fill="#c2cfdc"/>
    <rect x="294.5" y="552.8" width="5" height="1.1" fill="#222"/>
    <path d="M423.2 553.3 H428.6 M425.9 550.6 V556" stroke="#222" stroke-width="1.1"/>
    <circle cx="340.5" cy="562.6" r="6" fill="#f8f8f8" stroke="#333" stroke-width="1.4"/>
    <path d="M821 626h2v2h-2z M824 626h2v2h-2z M827 626h2v2h-2z M824 623h2v2h-2z M827 623h2v2h-2z M827 620h2v2h-2z" fill="#ababab"/>
  </svg>

  <!-- annotation -->
  <svg class="a" style="left:0;top:0" width="832" height="631" viewBox="0 0 832 631">
    <defs><filter id="sh" x="-20%" y="-20%" width="140%" height="140%"><feGaussianBlur in="SourceAlpha" stdDeviation="1.6"/><feOffset dx="1" dy="1.5"/><feComponentTransfer><feFuncA type="linear" slope="0.45"/></feComponentTransfer><feMerge><feMergeNode/><feMergeNode in="SourceGraphic"/></feMerge></filter></defs>
    <g filter="url(#sh)">
      <rect x="410.3" y="359.9" width="45" height="113.5" rx="7" ry="7" fill="none" stroke="#000" stroke-width="3.8"/>
      <path d="M486.7 296.2 L457.8 344.7 M456.6 331 L457.5 345 L470 338.6" fill="none" stroke="#000" stroke-width="3.6" stroke-linecap="round" stroke-linejoin="round"/>
      </g>
    <defs><filter id="glow" x="-10%" y="-30%" width="120%" height="160%"><feMorphology in="SourceAlpha" operator="dilate" radius="1.5" result="d"/><feGaussianBlur in="d" stdDeviation="0.8" result="b"/><feFlood flood-color="#fff"/><feComposite in2="b" operator="in"/><feMerge><feMergeNode/><feMergeNode in="SourceGraphic"/></feMerge></filter></defs>
    <text x="409.3" y="283" font-family="Liberation Mono" font-size="38" fill="#000" stroke="#000" stroke-width="0.7" textLength="176" lengthAdjust="spacing" filter="url(#glow)">Ctrl + M</text>
  </svg>
</div>
<div id="frame"></div>
</body></html>
